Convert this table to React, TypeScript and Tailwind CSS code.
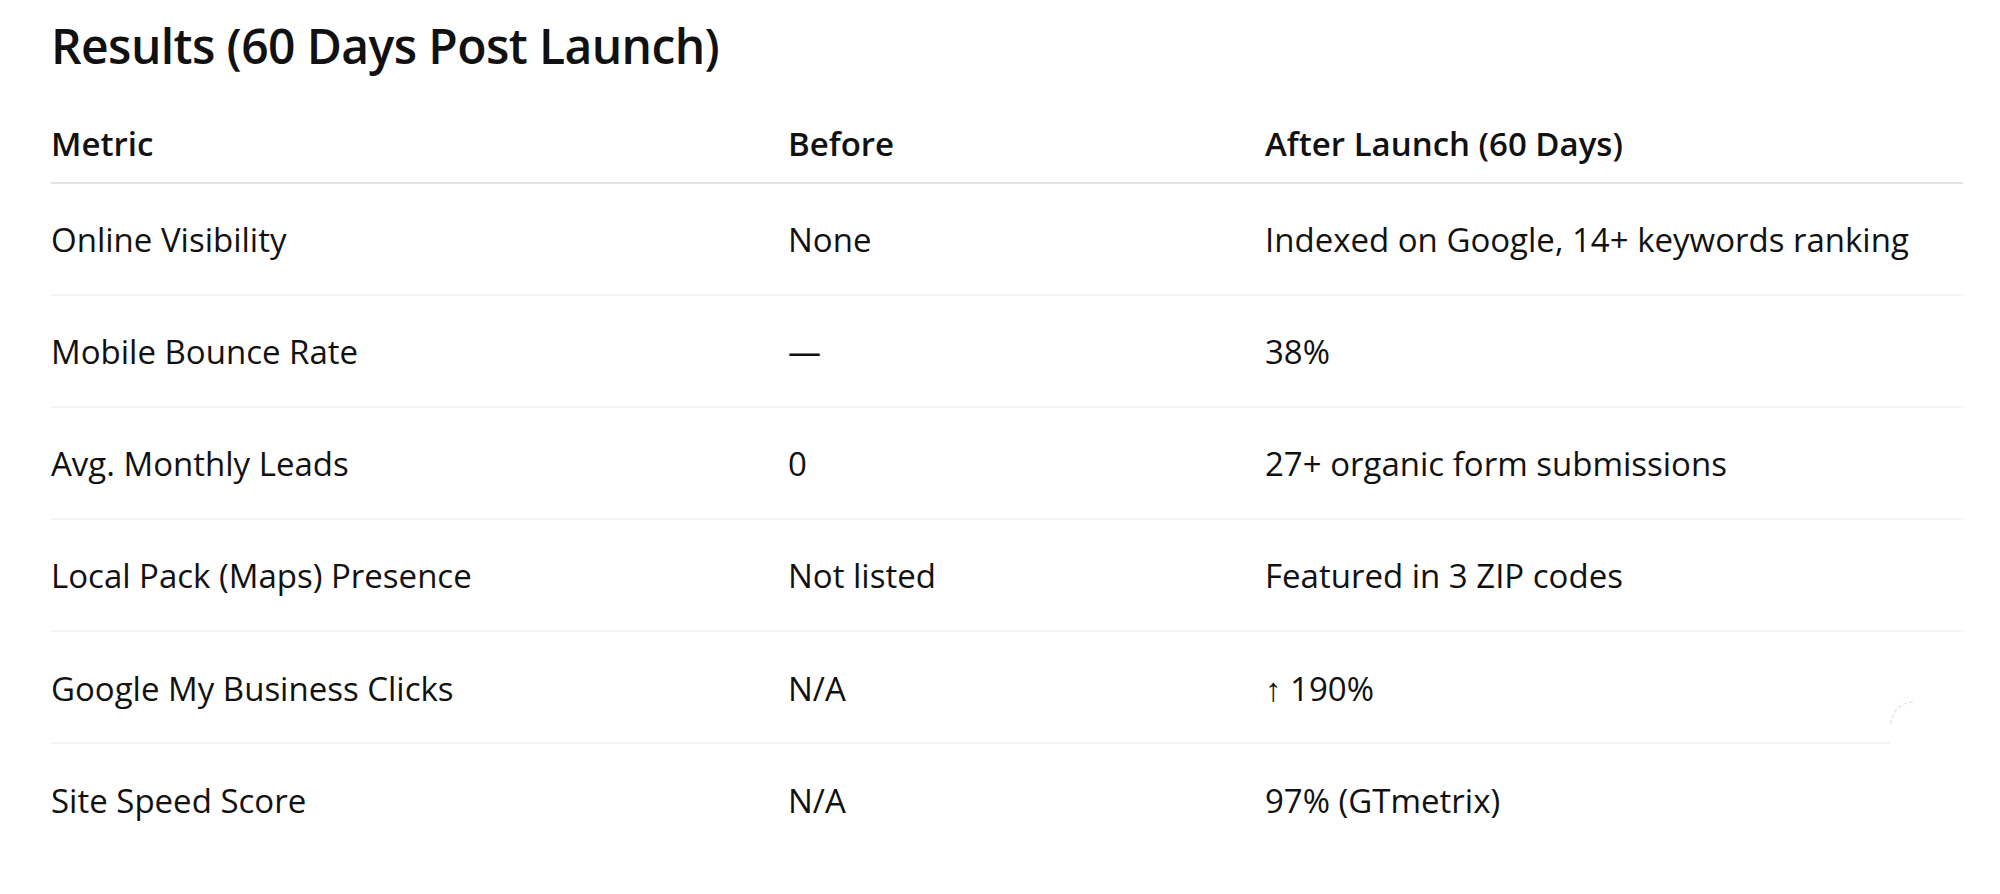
import React from "react";

const rows = [
  ["Online Visibility", "None", "Indexed on Google, 14+ keywords ranking"],
  ["Mobile Bounce Rate", "—", "38%"],
  ["Avg. Monthly Leads", "0", "27+ organic form submissions"],
  ["Local Pack (Maps) Presence", "Not listed", "Featured in 3 ZIP codes"],
  ["Google My Business Clicks", "N/A", "↑ 190%"],
  ["Site Speed Score", "N/A", "97% (GTmetrix)"],
];

export default function App() {
  return (
    <div
      className="w-[2000px] h-[894px] bg-white text-[#111] overflow-hidden pl-[51px] pr-[37px]"
      style={{ fontFamily: '"Open Sans", "Noto Sans", sans-serif' }}
    >
      <h2 className="pt-[18px] text-[48px] leading-[56px] font-semibold tracking-[-0.6px]">
        Results (60 Days Post Launch)
      </h2>
      <div className="mt-[30px] text-[33px] leading-[44px]">
        <div className="flex h-[80px] items-center pt-[2px] border-b-[2px] border-[#e3e3e3] font-semibold">
          <div className="w-[737px]">Metric</div>
          <div className="w-[477px]">Before</div>
          <div className="flex-1">After Launch (60 Days)</div>
        </div>
        {rows.map((r, i) => {
          const last = i === rows.length - 1;
          const special = i === rows.length - 2;
          const border = last || special ? "" : "border-b-[2px] border-[#f3f3f3]";
          return (
            <div
              key={i}
              className={`relative flex h-[112px] items-center pt-[2px] ${border}`}
            >
              <div className="w-[737px]">{r[0]}</div>
              <div className="w-[477px]">{r[1]}</div>
              <div className="flex-1">{r[2]}</div>
              {special && (
                <>
                  <div className="absolute left-0 bottom-0 w-[1839px] h-[2px] bg-[#f3f3f3]" />
                  <svg
                    className="absolute left-[1838px] bottom-[18px]"
                    width="26"
                    height="26"
                    viewBox="0 0 26 26"
                  >
                    <path
                      d="M2 24 A22 22 0 0 1 24 2"
                      fill="none"
                      stroke="#e6e6e6"
                      strokeWidth="1.5"
                      strokeDasharray="4 2"
                    />
                  </svg>
                </>
              )}
            </div>
          );
        })}
      </div>
    </div>
  );
}
